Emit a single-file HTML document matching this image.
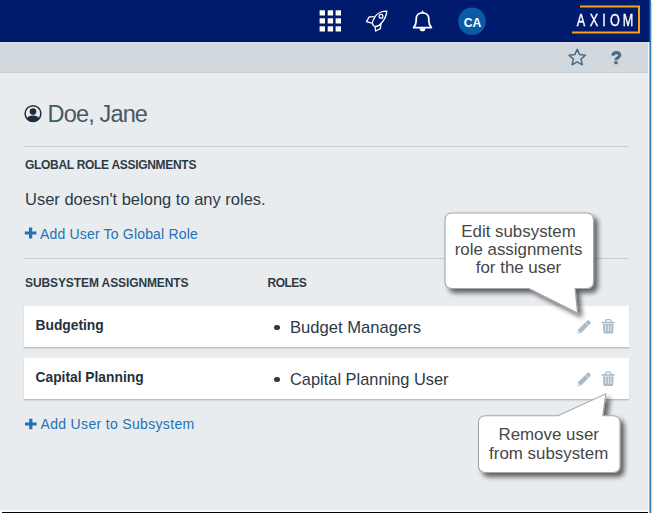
<!DOCTYPE html>
<html><head><meta charset="utf-8">
<style>
html,body{margin:0;padding:0;}
body{width:653px;height:514px;position:relative;overflow:hidden;background:#ffffff;font-family:"Liberation Sans",sans-serif;}
.a{position:absolute;white-space:nowrap;line-height:1;}
#content{position:absolute;left:0;top:73px;width:648px;height:437px;background:#e9ecef;}
#cb1{position:absolute;left:0;top:510px;width:648px;height:1px;background:#f2f4f6;}
#cb2{position:absolute;left:0;top:511px;width:648px;height:1px;background:#fbfcfd;}
#vs{position:absolute;left:648px;top:42px;width:1px;height:470px;background:#fbf8f4;}
#hdr{position:absolute;left:0;top:0;width:649px;height:42px;background:#001a6e;}
#bar{position:absolute;left:0;top:42px;width:648px;height:31px;background:#d1d8de;}
#vb1{position:absolute;left:649px;top:0;width:1px;height:513px;background:#7fb0e4;}
#vb1b{position:absolute;left:650px;top:0;width:1px;height:513px;background:#3b7fc3;}
#vb2{position:absolute;left:651px;top:2px;width:1px;height:511px;background:#ffd84a;}
#vb3{position:absolute;left:652px;top:2px;width:1px;height:511px;background:#fffbe8;}
#hb{position:absolute;left:2px;top:512px;width:646px;height:1px;background:#000;}
.hr{position:absolute;left:24px;width:605px;height:1px;background:#c6cdd3;}
.row{position:absolute;left:24px;width:605px;height:41px;background:#fff;box-shadow:0 1px 1px rgba(0,0,0,0.14),0 2px 1px rgba(0,0,0,0.05);}
.lbl{font-weight:bold;font-size:12px;color:#2f3a44;}
.link{color:#2273b5;font-size:14px;letter-spacing:0.18px;}
.ax{position:absolute;top:12.9px;-webkit-text-stroke:0.35px #fff;width:40px;text-align:center;font-size:15.8px;line-height:1;color:#fff;transform:scaleX(0.8);}
.tip{position:absolute;background:#fff;border:1px solid #9a9a9a;border-radius:6px;box-shadow:3px 3px 4px rgba(0,0,0,0.45);color:#404040;font-size:17px;text-align:center;line-height:18.5px;}
</style></head>
<body>
<div id="hdr"></div>
<div id="bar"></div>
<div id="content"></div>
<div class="a" style="left:0;top:42px;width:648px;height:2px;background:#d6dce0;"></div><div class="a" style="left:0;top:72px;width:648px;height:1px;background:#cbd2d7;"></div><div class="a" style="left:0;top:74px;width:648px;height:1px;background:#edf0f2;"></div><div id="cb1"></div><div id="cb2"></div><div id="vs"></div><div id="vb1"></div><div id="vb1b"></div><div class="a" style="left:649px;top:0;width:1px;height:42px;background:#143f94;"></div><div id="vb3"></div>
<div id="vb2"></div>
<div id="hb"></div>

<!-- header icons -->
<svg class="a" style="left:0;top:0" width="649" height="42" viewBox="0 0 649 42">
  <g fill="#fff">
    <rect x="319.6" y="10.3" width="5.4" height="5.2"/><rect x="327.7" y="10.3" width="5.4" height="5.2"/><rect x="335.6" y="10.3" width="5.4" height="5.2"/>
    <rect x="319.6" y="18.3" width="5.4" height="5.2"/><rect x="327.7" y="18.3" width="5.4" height="5.2"/><rect x="335.6" y="18.3" width="5.4" height="5.2"/>
    <rect x="319.6" y="26.3" width="5.4" height="5.2"/><rect x="327.7" y="26.3" width="5.4" height="5.2"/><rect x="335.6" y="26.3" width="5.4" height="5.2"/>
  </g>
  <g fill="none" stroke="#fff" stroke-width="1.3" stroke-linejoin="round">
    <path d="M386.8,11.1 C381,11 375.5,14 373.5,19.5 C372,22 372,24.5 374,26 C376,27 379,26 381.5,23 C385,19 386.5,14.5 386.8,11.1 Z"/>
    <circle cx="381" cy="16.3" r="1.9"/>
    <path d="M373.8,16.6 L369.3,16.9 L366.5,21.6 L371.8,23.2"/>
    <path d="M375,26.3 L375.6,31 L380.4,28.6 L380.9,24"/>
  </g>
  <g stroke="#fff" stroke-width="1.8" fill="none" stroke-linejoin="round">
    <path d="M413.6,27.6 L431.4,27.6 C430,26 428.8,24 428.8,20.5 L428.8,18.8 C428.8,15 426,12.8 422.5,12.8 C419,12.8 416.2,15 416.2,18.8 L416.2,20.5 C416.2,24 415,26 413.6,27.6 Z"/>
  </g>
  <path d="M420.9,12.6 Q422,11.8 422.5,10.1 Q423,11.8 424.1,12.6 Z" fill="#fff"/>
  <path d="M419.5,28.2 A3,3.1 0 0 0 425.5,28.2 Z" fill="#fff"/>
  <circle cx="472" cy="21.2" r="13.8" fill="#0a5ba6"/>
  <path d="M580,6.5 L639,6.5 L639,32.5 L572,32.5" fill="none" stroke="#f5a31a" stroke-width="2"/>
</svg>
<div class="a" style="left:463.8px;top:16.6px;font-size:12.2px;font-weight:bold;color:#fff;">CA</div>
<div class="ax" style="left:560.9px">A</div><div class="ax" style="left:573.9px">X</div><div class="ax" style="left:584.4px">I</div><div class="ax" style="left:595.1px">O</div><div class="ax" style="left:607.7px">M</div>

<!-- bar icons -->
<svg class="a" style="left:0;top:42px" width="649" height="31" viewBox="0 42 649 31">
  <path d="M577.2,49.2 L579.6,54.6 L585.4,55.2 L581,59.1 L582.3,64.8 L577.2,61.8 L572.1,64.8 L573.4,59.1 L569,55.2 L574.8,54.6 Z" fill="none" stroke="#4c6b80" stroke-width="1.5" stroke-linejoin="round"/>
</svg>
<svg class="a" style="left:600px;top:45px" width="30" height="25" viewBox="600 45 30 25">
  <path d="M612.6,55.6 C613.2,53.4 614.6,52.6 616.4,52.6 C618.4,52.6 619.7,53.8 619.7,55.3 C619.7,57.6 615.9,57.8 615.9,60.3" fill="none" stroke="#4c6b80" stroke-width="3.1" stroke-linejoin="round"/>
  <rect x="614.3" y="61.3" width="3.3" height="2.9" fill="#4c6b80"/>
</svg>

<!-- content -->
<svg class="a" style="left:23px;top:104px" width="20" height="20" viewBox="23 104 20 20">
  <circle cx="33" cy="113.6" r="7.9" fill="none" stroke="#1e2d3b" stroke-width="1.5"/>
  <circle cx="33" cy="111.6" r="3.3" fill="#1e2d3b"/>
  <path d="M26.8,118.6 C27.8,116.6 30,115.6 33,115.6 C36,115.6 38.2,116.6 39.2,118.6 A7.9,7.9 0 0 1 26.8,118.6 Z" fill="#1e2d3b"/>
</svg>
<div class="a" style="left:47.6px;top:102.7px;font-size:23.5px;color:#4a5661;letter-spacing:-0.85px;">Doe, Jane</div>

<div class="hr" style="top:146px"></div>
<div class="a lbl" style="left:25px;top:158.9px;letter-spacing:-0.3px;">GLOBAL ROLE ASSIGNMENTS</div>
<div class="a" style="left:25px;top:191.2px;font-size:16.5px;color:#2c3a46;">User doesn't belong to any roles.</div>
<svg class="a" style="left:24px;top:227px" width="14" height="13" viewBox="24 227 14 13">
  <path d="M30.6,227.5 V238.5 M24.8,233 H36.4" stroke="#1f72b6" stroke-width="3.2"/>
</svg>
<div class="a link" style="left:40px;top:226.6px;">Add User To Global Role</div>

<div class="hr" style="top:258px"></div>
<div class="a lbl" style="left:25px;top:276.8px;letter-spacing:-0.1px;">SUBSYSTEM ASSIGNMENTS</div>
<div class="a lbl" style="left:267.5px;top:276.8px;letter-spacing:-0.5px;">ROLES</div>

<div class="row" style="top:306px"></div>
<div class="row" style="top:358px"></div>
<div class="a" style="left:35.5px;top:319.2px;font-size:13.8px;font-weight:bold;color:#24313d;">Budgeting</div>
<div class="a" style="left:35.5px;top:371.2px;font-size:13.8px;font-weight:bold;color:#24313d;">Capital Planning</div>
<div class="a" style="left:274.4px;top:324.9px;width:5.6px;height:5.6px;border-radius:50%;background:#2c3a46;"></div>
<div class="a" style="left:274.4px;top:376.6px;width:5.6px;height:5.6px;border-radius:50%;background:#2c3a46;"></div>
<div class="a" style="left:290px;top:319.6px;font-size:16.6px;color:#2c3a46;">Budget Managers</div>
<div class="a" style="left:290px;top:370.9px;font-size:16.4px;color:#2c3a46;">Capital Planning User</div>

<!-- row icons -->
<svg class="a" style="left:570px;top:310px" width="55" height="85" viewBox="570 310 55 85">
  <g transform="translate(0,0)">
    <path d="M577.3,333.8 L578.2,329.6 L587.2,320.6 Q588.2,319.8 589,320.4 L590.4,321.8 Q591,322.6 590.4,323.6 L581.4,332.8 Z" fill="#a8bbc7"/>
    <path d="M585.4,322.4 L588.6,325.6" stroke="#e6edf1" stroke-width="0.9"/>
    <path d="M577.6,333.2 L578.5,330.6 L580.1,332.3 Z" fill="#eef3f6"/>
    <rect x="601.8" y="321.7" width="12.8" height="1.7" fill="#a8bbc7"/>
    <path d="M605.6,321.9 V320.7 Q605.6,319.7 606.6,319.7 H610 Q611,319.7 611,320.7 V321.9" fill="none" stroke="#a8bbc7" stroke-width="1.3"/>
    <path d="M603,324 H613.6 L613.2,332.2 Q613.1,333.5 611.8,333.5 H604.8 Q603.5,333.5 603.4,332.2 Z" fill="#a8bbc7"/>
    <path d="M605.6,325 V331.6 M608.3,325 V331.6 M611,325 V331.6" stroke="#e4ebef" stroke-width="1"/>
  </g>
  <g transform="translate(0,52.4)">
    <path d="M577.3,333.8 L578.2,329.6 L587.2,320.6 Q588.2,319.8 589,320.4 L590.4,321.8 Q591,322.6 590.4,323.6 L581.4,332.8 Z" fill="#a8bbc7"/>
    <path d="M585.4,322.4 L588.6,325.6" stroke="#e6edf1" stroke-width="0.9"/>
    <path d="M577.6,333.2 L578.5,330.6 L580.1,332.3 Z" fill="#eef3f6"/>
    <rect x="601.8" y="321.7" width="12.8" height="1.7" fill="#a8bbc7"/>
    <path d="M605.6,321.9 V320.7 Q605.6,319.7 606.6,319.7 H610 Q611,319.7 611,320.7 V321.9" fill="none" stroke="#a8bbc7" stroke-width="1.3"/>
    <path d="M603,324 H613.6 L613.2,332.2 Q613.1,333.5 611.8,333.5 H604.8 Q603.5,333.5 603.4,332.2 Z" fill="#a8bbc7"/>
    <path d="M605.6,325 V331.6 M608.3,325 V331.6 M611,325 V331.6" stroke="#e4ebef" stroke-width="1"/>
  </g>
</svg>

<svg class="a" style="left:24px;top:417px" width="14" height="13" viewBox="24 417 14 13">
  <path d="M30.8,418.8 V429.3 M25,424 H36.6" stroke="#1f72b6" stroke-width="3.2"/>
</svg>
<div class="a link" style="left:40.5px;top:416.9px;letter-spacing:0.33px;">Add User to Subsystem</div>

<!-- tooltips -->
<svg class="a" style="left:430px;top:200px" width="223" height="290" viewBox="430 200 223 290">
  <defs>
    <filter id="sh" x="-20%" y="-20%" width="150%" height="150%">
      <feGaussianBlur in="SourceAlpha" stdDeviation="2.6"/>
      <feOffset dx="3.6" dy="3.6" result="o"/>
      <feComponentTransfer><feFuncA type="linear" slope="0.6"/></feComponentTransfer>
      <feMerge><feMergeNode/><feMergeNode in="SourceGraphic"/></feMerge>
    </filter>
  </defs>
  <path filter="url(#sh)" d="M452,213 H586.5 Q593.5,213 593.5,220 V281.5 Q593.5,288.5 586.5,288.5 H575 L577.6,313 L529,288.5 H452 Q445,288.5 445,281.5 V220 Q445,213 452,213 Z" fill="#fff" stroke="#a6a6a6" stroke-width="1.1"/>
  <path filter="url(#sh)" d="M485.5,415.7 H558 L605.8,393.8 L602.8,415.7 H613 Q620,415.7 620,422.7 V465.5 Q620,472.5 613,472.5 H485.5 Q478.5,472.5 478.5,465.5 V422.7 Q478.5,415.7 485.5,415.7 Z" fill="#fff" stroke="#a6a6a6" stroke-width="1.1"/>
</svg>
<div class="a" style="left:444px;top:222.8px;width:149px;text-align:center;font-size:16.9px;line-height:18.3px;color:#474747;white-space:normal;">Edit subsystem<br>role assignments<br>for the user</div>
<div class="a" style="left:477.7px;top:425.3px;width:142px;text-align:center;font-size:16.9px;line-height:19px;color:#474747;white-space:normal;">Remove user<br>from subsystem</div>
</body></html>
